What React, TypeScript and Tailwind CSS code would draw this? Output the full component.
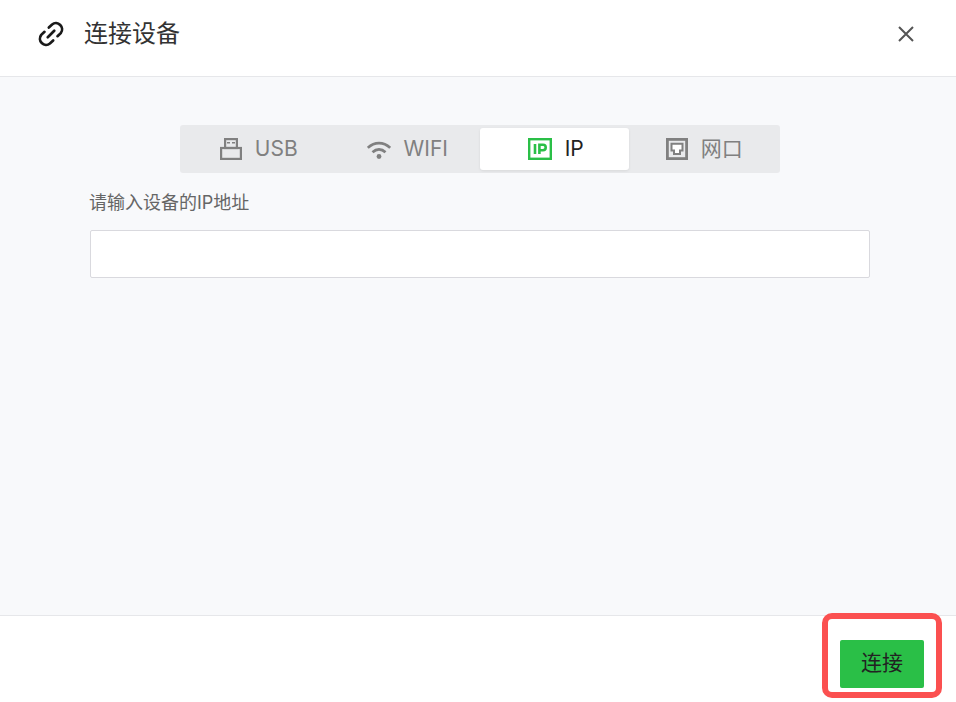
const FONT = "font-['Inter','Noto_Sans_CJK_SC',sans-serif]";

function UsbIcon({ className }: { className: string }) {
  return (
    <svg viewBox="0 0 22 22" className={className} fill="none" stroke="currentColor" strokeWidth="2.2">
      <rect x="1.1" y="10" width="19.8" height="10.9" />
      <rect x="5.1" y="1.1" width="11.8" height="8.9" />
      <path d="M7 4.8h3M12 4.8h3" strokeWidth="1.6" />
    </svg>
  );
}

function WifiIcon({ className }: { className: string }) {
  return (
    <svg viewBox="0 0 24 24" className={className} fill="none" stroke="currentColor" strokeWidth="2.8">
      <path d="M0.8 10.8C7.5 4.6 16.5 4.6 23.2 10.8" />
      <path d="M5.5 15.2C9.5 11.6 14.5 11.6 18.5 15.2" />
      <circle cx="12" cy="19.5" r="2.4" fill="currentColor" stroke="none" />
    </svg>
  );
}

function IpIcon({ className }: { className: string }) {
  return (
    <svg viewBox="0 0 24 22" className={className} fill="none">
      <rect x="1.2" y="1.2" width="21.6" height="19.6" stroke="currentColor" strokeWidth="2.4" />
      <path d="M7 6v10" stroke="currentColor" strokeWidth="2.6" />
      <path d="M11.4 16V6.8h3.6a2.6 2.6 0 0 1 0 5.4h-3.6" stroke="currentColor" strokeWidth="2.6" />
    </svg>
  );
}

function LanIcon({ className }: { className: string }) {
  return (
    <svg viewBox="0 0 22 22" className={className} fill="none" stroke="currentColor">
      <rect x="1.4" y="1.4" width="19.2" height="19.2" strokeWidth="2.8" />
      <path d="M5.5 5.8h11v6.7h-2.5v3.5h-6v-3.5h-2.5z" strokeWidth="2" fill="#fff" />
    </svg>
  );
}

function LinkIcon({ className }: { className: string }) {
  return (
    <svg viewBox="0 0 24 24" className={className} fill="none" stroke="currentColor" strokeWidth="2.5" strokeLinecap="round">
      <path d="M10 6l3-2.8a5.7 5.7 0 0 1 8 8L18 14" />
      <path d="M14 18l-3 2.8a5.7 5.7 0 0 1-8-8L6 10" />
      <path d="M9 15l6-6" />
    </svg>
  );
}

const tabs = [
  { label: "USB", icon: UsbIcon, size: "w-[22px] h-[22px]" },
  { label: "WIFI", icon: WifiIcon, size: "w-[24px] h-[24px]" },
  { label: "IP", icon: IpIcon, size: "w-[24px] h-[22px]" },
  { label: "网口", icon: LanIcon, size: "w-[22px] h-[22px]" },
];

export default function App() {
  const active = "IP";

  return (
    <div className={`${FONT} flex h-[702px] w-[956px] flex-col bg-white`}>
      <header className="flex h-[77px] shrink-0 items-center justify-between border-b border-[#e6e7ea] pb-[8px] pl-[38px] pr-[41px]">
        <div className="flex items-center gap-[20px]">
          <LinkIcon className="h-[26px] w-[26px] text-[#1a1a1a]" />
          <span className="text-[24px] leading-[32px] text-[#333]">连接设备</span>
        </div>
        <svg viewBox="0 0 18 18" className="h-[18px] w-[18px] text-[#555]" fill="none" stroke="currentColor" strokeWidth="2">
          <path d="M2 2l14 14M16 2L2 16" />
        </svg>
      </header>

      <main className="flex flex-1 flex-col bg-[#f8f9fb] pl-[90px] pr-[86px] pt-[48px]">
        <div className="mx-auto flex h-[48px] w-[600px] items-center rounded-[3px] bg-[#e9eaec] px-[3px]">
          {tabs.map((tab) => {
            const Icon = tab.icon;
            const isActive = tab.label === active;
            return (
              <div
                key={tab.label}
                className={`flex h-[42px] flex-1 items-center justify-center gap-[13px] rounded-[3px] pl-[3px] text-[21px] ${
                  isActive ? "bg-white text-[#222] shadow-[0_1px_3px_rgba(0,0,0,0.08)]" : "text-[#808080]"
                }`}
              >
                <Icon className={`${tab.size} ${isActive ? "text-[#2abf47]" : "text-[#808080]"}`} />
                <span>{tab.label}</span>
              </div>
            );
          })}
        </div>

        <label className="mt-[17px] -ml-px text-[18px] leading-[26px] text-[#666]">请输入设备的IP地址</label>
        <input className="mt-[14px] h-[48px] w-full rounded-[2px] border border-[#d9d9de] bg-white" />
      </main>

      <footer className="flex h-[87px] shrink-0 items-start justify-end border-t border-[#e6e7ea] pr-[32px] pt-[24px]">
        <div className="relative">
          <button className="h-[48px] w-[84px] rounded-[2px] bg-[#2abf47] pb-[2px] text-[21px] text-[#222]">连接</button>
          <div className="absolute -inset-x-[18px] -bottom-[10px] -top-[27px] rounded-[10px] border-[6px] border-[#fb5050]" />
        </div>
      </footer>
    </div>
  );
}
